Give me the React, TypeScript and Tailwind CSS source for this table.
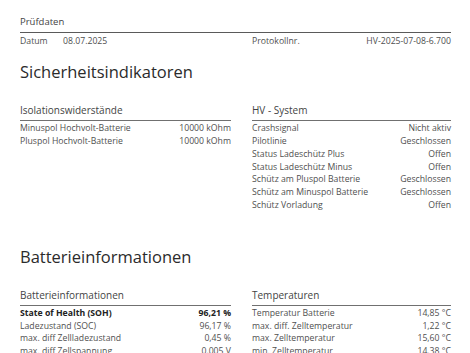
import React from 'react';

type Row = { label: string; value: string; bold?: boolean };

const isolation: Row[] = [
  { label: 'Minuspol Hochvolt-Batterie', value: '10000 kOhm' },
  { label: 'Pluspol Hochvolt-Batterie', value: '10000 kOhm' },
];

const hvSystem: Row[] = [
  { label: 'Crashsignal', value: 'Nicht aktiv' },
  { label: 'Pilotlinie', value: 'Geschlossen' },
  { label: 'Status Ladeschütz Plus', value: 'Offen' },
  { label: 'Status Ladeschütz Minus', value: 'Offen' },
  { label: 'Schütz am Pluspol Batterie', value: 'Geschlossen' },
  { label: 'Schütz am Minuspol Batterie', value: 'Geschlossen' },
  { label: 'Schütz Vorladung', value: 'Offen' },
];

const battery: Row[] = [
  { label: 'State of Health (SOH)', value: '96,21 %', bold: true },
  { label: 'Ladezustand (SOC)', value: '96,17 %' },
  { label: 'max. diff Zellladezustand', value: '0,45 %' },
  { label: 'max. diff Zellspannung', value: '0,005 V' },
];

const temperatures: Row[] = [
  { label: 'Temperatur Batterie', value: '14,85 °C' },
  { label: 'max. diff. Zelltemperatur', value: '1,22 °C' },
  { label: 'max. Zelltemperatur', value: '15,60 °C' },
  { label: 'min. Zelltemperatur', value: '14,38 °C' },
];

function Table({ title, rows }: { title: string; rows: Row[] }) {
  return (
    <div>
      <div className="text-[10px] leading-[14px] text-[#444] pb-[3px] border-b border-[#707070]">{title}</div>
      <div className="pt-[1px]">
        {rows.map((r) => (
          <div
            key={r.label}
            className={`flex justify-between text-[8.7px] leading-[12.8px] ${r.bold ? 'font-bold text-[#222]' : 'text-[#4f4f4f]'}`}
          >
            <span>{r.label}</span>
            <span>{r.value}</span>
          </div>
        ))}
      </div>
    </div>
  );
}

export default function App() {
  return (
    <div className="w-[470px] h-[353px] overflow-hidden bg-white px-[20px] pt-[15px] font-['Open_Sans','Noto_Sans',sans-serif]">
      {/* Prüfdaten */}
      <div className="w-[431px]">
        <div className="text-[9.5px] leading-[14px] text-[#444] pb-[3px] border-b border-[#5a5a5a]">Prüfdaten</div>
        <div className="flex text-[8.7px] leading-[12.8px] text-[#4f4f4f] pt-[1.5px]">
          <div className="w-[232px] flex">
            <span className="w-[43px]">Datum</span>
            <span>08.07.2025</span>
          </div>
          <div className="flex-1 flex justify-between">
            <span>Protokollnr.</span>
            <span>HV-2025-07-08-6.700</span>
          </div>
        </div>
      </div>

      <h2 className="mt-[13px] text-[16.5px] leading-[24px] font-medium text-[#2b2b2b]">Sicherheitsindikatoren</h2>

      <div className="mt-[19px] flex gap-[21px] w-[431px] items-start">
        <div className="w-[211px]">
          <Table title="Isolationswiderstände" rows={isolation} />
        </div>
        <div className="w-[199px]">
          <Table title="HV - System" rows={hvSystem} />
        </div>
      </div>

      <h2 className="mt-[33px] text-[16.5px] leading-[24px] font-medium text-[#2b2b2b]">Batterieinformationen</h2>

      <div className="mt-[19px] flex gap-[21px] w-[431px] items-start">
        <div className="w-[211px]">
          <Table title="Batterieinformationen" rows={battery} />
        </div>
        <div className="w-[199px]">
          <Table title="Temperaturen" rows={temperatures} />
        </div>
      </div>
    </div>
  );
}
